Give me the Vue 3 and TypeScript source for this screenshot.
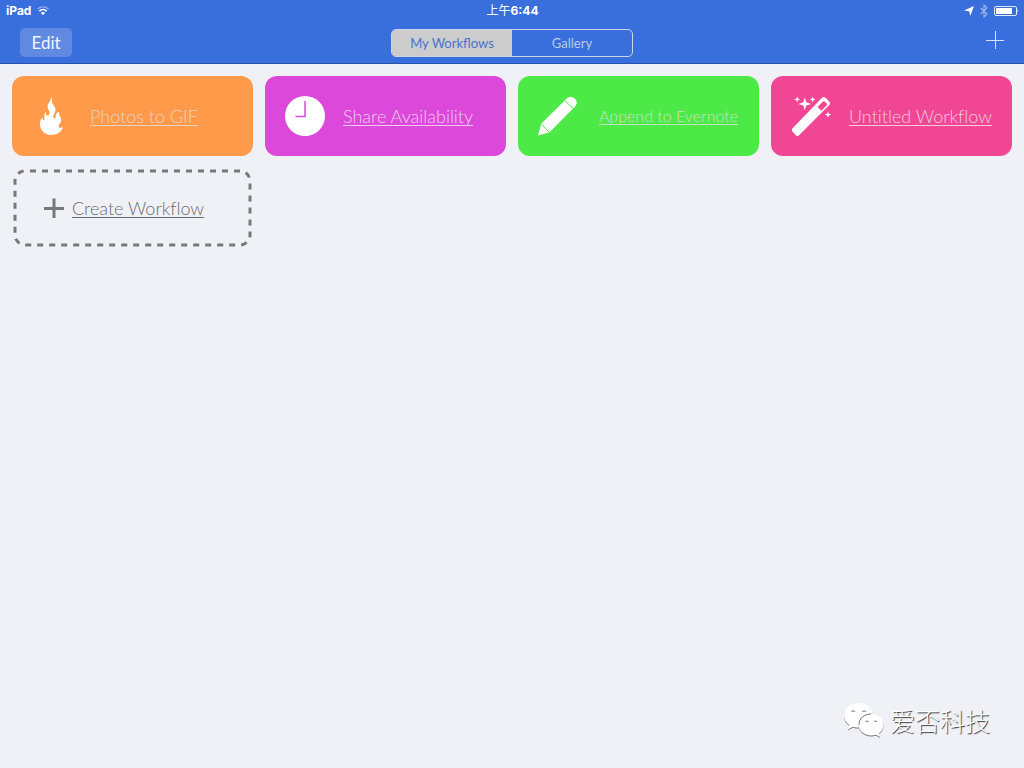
<script setup lang="ts">
import { ref } from 'vue'

type IconName = 'flame' | 'clock' | 'pencil' | 'wand'

interface Workflow {
  name: string
  icon: IconName
  compact?: boolean
}

const workflows: Workflow[] = [
  { name: 'Photos to GIF', icon: 'flame' },
  { name: 'Share Availability', icon: 'clock' },
  { name: 'Append to Evernote', icon: 'pencil', compact: true },
  { name: 'Untitled Workflow', icon: 'wand' },
]

const tabs = ['My Workflows', 'Gallery']
const activeTab = ref(tabs[0])
</script>

<template>
  <div class="app">
    <header class="header">
      <div class="status">
        <div class="status-left">
          <span>iPad</span>
          <svg class="wifi" viewBox="0 0 12 9" width="12" height="9" aria-hidden="true">
            <path d="M.5 3a8 8 0 0 1 11 0" fill="none" stroke="#fff" stroke-opacity=".45" stroke-width="1.2" />
            <path d="M2.400 5.100a5.200 5.200 0 0 1 7.200 0" fill="none" stroke="#fff" stroke-width="1.800" />
            <path d="M6 9 3.900 7a3 3 0 0 1 4.200 0z" fill="#fff" />
          </svg>
        </div>
        <div class="time"><span class="period">上午</span>6:44</div>
        <div class="status-right">
          <svg viewBox="0 0 10 10" width="10" height="10" aria-hidden="true">
            <path d="M10 0 6.2 10 5.2 5.2 0 4.4z" fill="#fff" />
          </svg>
          <svg viewBox="0 0 8 14" width="8" height="14" aria-hidden="true">
            <path d="M.7 4 7 10 4 13V1l3 3L.7 10" fill="none" stroke="#fff" stroke-opacity=".5" stroke-width="1.1" />
          </svg>
          <svg viewBox="0 0 25 10" width="25" height="10" aria-hidden="true">
            <rect x=".5" y=".5" width="22" height="9" rx="1.5" fill="none" stroke="#fff" stroke-opacity=".85" />
            <rect x="2" y="2" width="16" height="6" rx=".5" fill="#fff" />
            <path d="M23.5 3q1.5 2 0 4z" fill="#fff" />
          </svg>
        </div>
      </div>
      <nav class="bar">
        <div class="bar-side">
          <button class="edit" type="button">Edit</button>
        </div>
        <div class="segments">
          <button
            v-for="tab in tabs"
            :key="tab"
            type="button"
            class="segment"
            :class="{ active: tab === activeTab }"
            :aria-pressed="tab === activeTab"
            @click="activeTab = tab"
          >
            {{ tab }}
          </button>
        </div>
        <div class="bar-side end">
          <button class="add" type="button" aria-label="New workflow">
            <svg viewBox="0 0 18 18" width="18" height="18" aria-hidden="true">
              <path d="M0 9.5h18M9.5 0v18" stroke="#d9e3f4" fill="none" />
            </svg>
          </button>
        </div>
      </nav>
    </header>

    <main class="grid">
      <a v-for="item in workflows" :key="item.name" href="#" class="card" :class="item.icon">
        <svg class="icon" viewBox="0 0 40 40" width="40" height="40" aria-hidden="true">
          <path
            v-if="item.icon === 'flame'"
            fill="#fff"
            d="M19.2.5C19 3.5 18 5 16.6 7.3c-1.7 2.8-1.2 5 .2 7.2 1.1 1.9.8 4-.5 4.7-1.5.7-2.9-.6-2.4-3.7-2.2 2-1.7 4.800-1.400 7.400.2 1.500-.9 1.800-1.600.8-.6-.8-.7-1.700-.5-2.700-2.200 3-3 6.500-2 10.200C9.800 36.100 14.200 39 19.500 39c5.800 0 10.200-3.200 11.500-8.200-1.700 1.400-3.500 1.400-4.200.3-.9-1.400.8-2.800 1.800-4.600 1.100-2.100.7-4.400-.6-6.300-1-1.400-1.300-2.900-.4-4.900-2.500 1-4.300 3-4 5.600.1 1.200-.8 1.700-1.600 1.200-1.100-.7-.8-2.400.1-4.100 1.700-3.200 2-5.400.1-8-1.800-2.400-2.800-4.300-1.900-6.500-.8-1-1.100-2-1.100-3z"
          />
          <template v-else-if="item.icon === 'clock'">
            <circle cx="20" cy="20" r="20" fill="#fff" />
            <path class="knockout" d="M20 5v15.500H10.500" fill="none" />
          </template>
          <template v-else-if="item.icon === 'pencil'">
            <path
              fill="#fff"
              d="M0 39.500 3.200 27.800 28.800 2.600q4-3.600 7.600-.4l.8.800q3.200 3.600-.2 7.400L11.600 36.200z"
            />
            <path class="knockout thin" d="m26.800 4.700 8.700 8M3.400 28.200l7.800 8" fill="none" />
          </template>
          <template v-else>
            <path
              fill="#fff"
              fill-rule="evenodd"
              d="M1.600 32.300 30.800 2q2-2 4 0l3.200 3.200q2 2 0 4L7.800 39.400q-1.500 1.200-2.800 0l-3.500-3.800q-1.400-1.600.1-3.300zM26.600 11l3.800 3.700 5.100-5.100q1.200-1.200 0-2.400l-1.400-1.400q-1.200-1.200-2.400 0z"
            />
            <path
              fill="#fff"
              d="m13.800 1.500 1.500 4.800 4.900 1.600-4.900 1.600-1.500 4.800-1.500-4.800-5-1.600 5-1.600zM6.200.5l.8 2.100 2.200.8-2.200.8-.8 2.200-.8-2.200-2.200-.8 2.200-.8zM21.700.5l.7 2.100 2.200.8-2.200.8-.7 2.200-.8-2.200-2.200-.8 2.200-.8zM37 15.300l.8 2.500 2.400.8-2.400.8-.8 2.500-.8-2.500-2.400-.8 2.400-.8z"
            />
          </template>
        </svg>
        <span class="label" :class="{ compact: item.compact }">{{ item.name }}</span>
      </a>

      <a href="#" class="card create">
        <svg class="outline" aria-hidden="true">
          <rect class="dashes" x="3" y="3" rx="10" />
        </svg>
        <svg viewBox="0 0 20 20" width="20" height="20" aria-hidden="true">
          <path d="M0 10.500h20M10 .5v20" stroke="#77787a" stroke-width="3" fill="none" />
        </svg>
        <span class="label">Create Workflow</span>
      </a>
    </main>

    <div class="watermark">
      <svg viewBox="0 0 42 36" width="42" height="36" aria-hidden="true">
        <g fill="#fff" class="bubbles">
          <path d="M15.500 1C7.500 1 1 6.500 1 13.500c0 4 2 7.200 5.300 9.500L5 27.500l5-2.700c2 .6 3.800.8 6 .8C24 25.500 30 20 30 13.300 30 6.500 23.500 1 15.500 1z" />
          <path d="M28 12c-7 0-12.300 4.900-12.300 10.800S21 33.500 28 33.500c1.700 0 3.400-.3 4.900-.8l4.400 2.300-1.200-3.700c2.600-2 4.400-5 4.400-8.500C40.500 16.900 35 12 28 12z" />
        </g>
        <path
          fill="none"
          stroke="#6f7074"
          d="M16 22.500C16 16.500 21 12 28 12M8.500 10a1.800 1.800 0 0 1 3.400 0M19.500 10a1.800 1.800 0 0 1 3.400 0M22.500 20a1.600 1.600 0 0 1 3 0M31 20a1.600 1.600 0 0 1 3 0"
        />
      </svg>
      <span>爱否科技</span>
    </div>
  </div>
</template>

<style>
body {
  background: #eff1f6;
}
</style>

<style scoped>
.app {
  position: relative;
  min-height: 100vh;
  background: #eff1f6;
  font-family: Lato, 'Noto Sans CJK SC', sans-serif;
}

button {
  font: inherit;
  border: 0;
  padding: 0;
  background: none;
  cursor: pointer;
}

svg {
  display: block;
  flex: none;
}

.header {
  box-sizing: border-box;
  background: #386fdc;
  border-bottom: 1px solid #2452ae;
  color: #fff;
}

.status {
  display: grid;
  grid-template-columns: 1fr auto 1fr;
  align-items: center;
  height: 21px;
  padding: 0 5px 0 6px;
  font: 700 12px/21px Inter, 'Noto Sans CJK SC', sans-serif;
}

.period {
  font-weight: 400;
}

.status-left,
.status-right {
  display: flex;
  align-items: center;
  gap: 6px;
}

.status-right {
  justify-content: flex-end;
}

.bar {
  display: grid;
  grid-template-columns: 1fr auto 1fr;
  align-items: center;
  height: 42px;
  padding: 0 20px;
}

.bar-side {
  display: flex;
}

.bar-side.end {
  justify-content: flex-end;
}

.edit {
  width: 52px;
  height: 29px;
  border-radius: 5px;
  background: #5f8ae0;
  color: #f2f6fd;
  font-size: 17px;
  line-height: 29px;
}

.segments {
  display: flex;
  box-sizing: border-box;
  width: 242px;
  height: 28px;
  margin-top: 2px;
  border: 1px solid #cbd5ea;
  border-radius: 5px;
  overflow: hidden;
}

.segment {
  flex: 1;
  color: #b9ccef;
  font-size: 13px;
}

.segment.active {
  background: #cccccd;
  color: #4673cd;
}

.add {
  padding-bottom: 4px;
}

.grid {
  display: grid;
  grid-template-columns: repeat(4, 1fr);
  gap: 12px;
  padding: 12px;
}

.card {
  --tint: #ff9a4a;
  position: relative;
  display: flex;
  align-items: center;
  gap: 18px;
  box-sizing: border-box;
  min-height: 80px;
  padding: 0 18px 0 20px;
  border-radius: 12px;
  background: var(--tint);
  text-decoration: none;
}

.flame {
  color: #ead3c0;
}

.clock {
  --tint: #dc48da;
  color: #f0cdf0;
}

.pencil {
  --tint: #4dea47;
  color: #c4e2c2;
}

.wand {
  --tint: #f04694;
  color: #f4cbde;
}

.knockout {
  stroke: var(--tint);
  stroke-width: 1.5;
}

.knockout.thin {
  stroke-width: 1;
}

.label {
  flex: 1;
  min-width: 0;
  font-size: 18px;
  font-weight: 300;
  line-height: 24px;
  white-space: nowrap;
  font-variant-ligatures: none;
  text-decoration: underline;
  text-decoration-thickness: 1px;
  text-underline-offset: 2px;
  text-decoration-skip-ink: none;
}

.label.compact {
  font-size: 16px;
  text-align: center;
}

.card.create {
  gap: 8px;
  padding-left: 32px;
  background: none;
  color: #6c6d71;
}

.outline {
  position: absolute;
  inset: 0;
  width: 100%;
  height: 100%;
}

.dashes {
  width: calc(100% - 6px);
  height: calc(100% - 6px);
  fill: none;
  stroke: #77787a;
  stroke-width: 3;
  stroke-dasharray: 6 6;
  stroke-dashoffset: 7;
}

.watermark {
  position: absolute;
  right: 34px;
  bottom: 30px;
  display: flex;
  align-items: center;
  gap: 5px;
  color: #fff;
  font: 300 25px/36px 'Noto Sans CJK SC', sans-serif;
  text-shadow: 1px 1px 1px #333;
}

.bubbles path {
  filter: drop-shadow(0 1px 0 #77787c);
}
</style>
